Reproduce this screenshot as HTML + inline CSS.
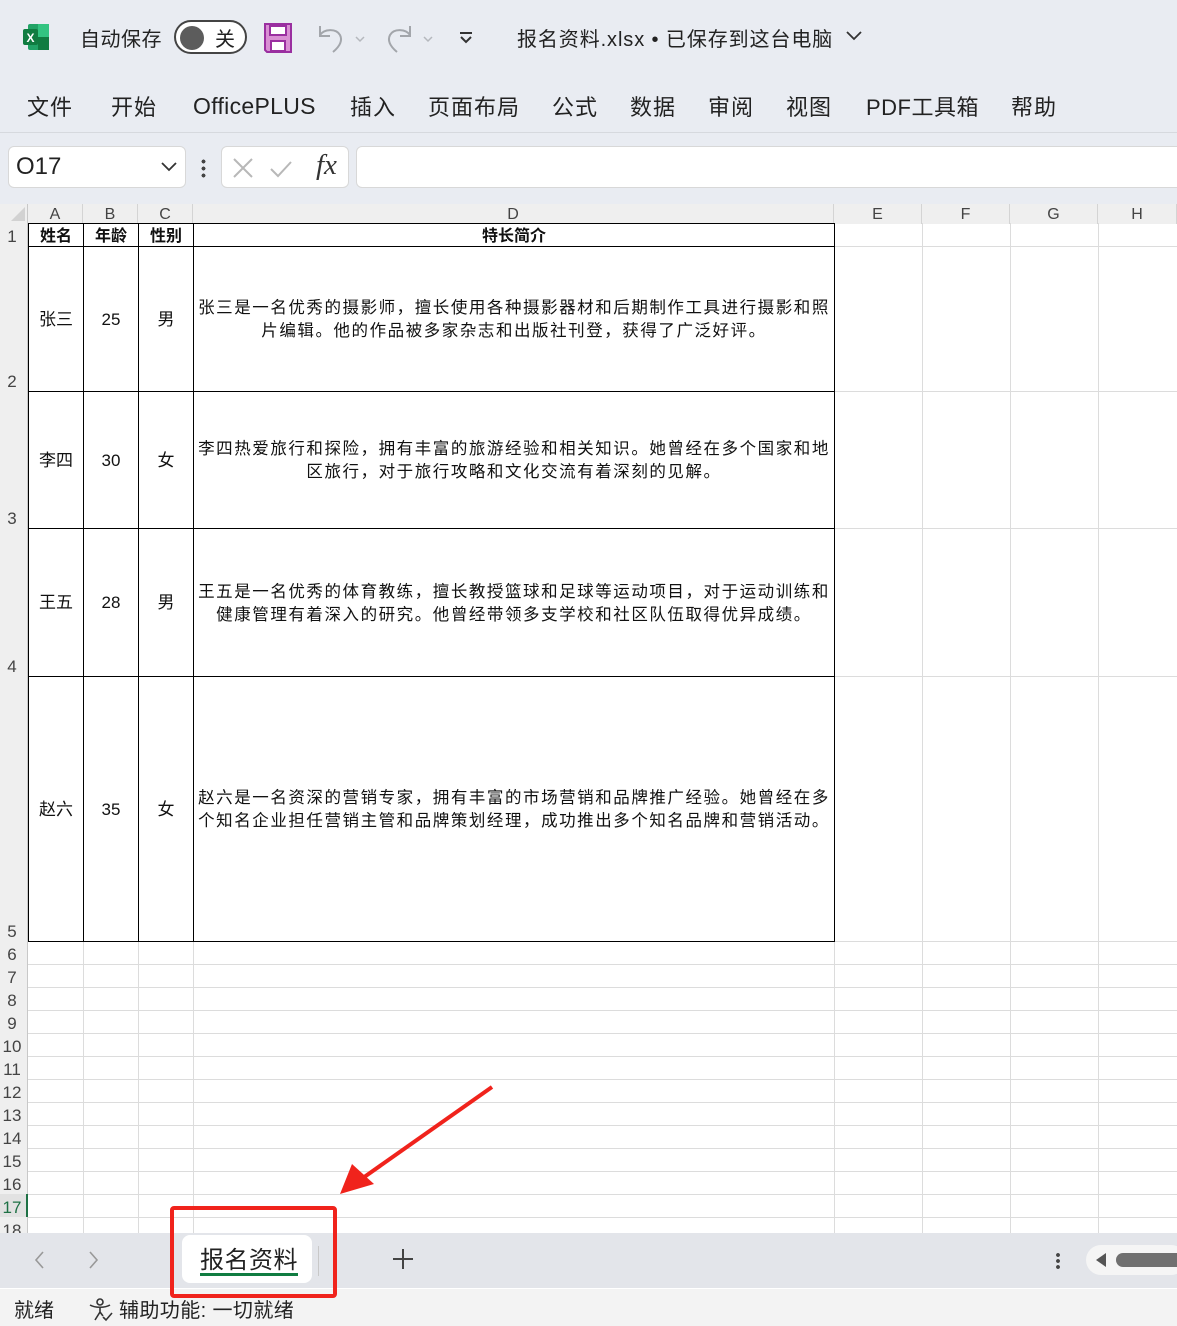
<!DOCTYPE html>
<html><head><meta charset="utf-8"><style>
*{margin:0;padding:0;box-sizing:border-box}
body{width:1177px;height:1326px;position:relative;overflow:hidden;background:#fff;font-family:"Liberation Sans","Noto Sans CJK SC",sans-serif;color:#222}
.a{position:absolute}
.top{left:0;top:0;width:1177px;height:132px;background:#e9ecf2}
.fbar{left:0;top:132px;width:1177px;height:72px;background:#e9ecf2;border-top:1px solid #d6d9de}
.t{font-size:21px;color:#222;white-space:nowrap}
.hdr{background:#efefef;color:#444;font-size:16px;text-align:center;line-height:19px}
.cell{font-size:16px;display:flex;align-items:center;justify-content:center;text-align:center;color:#111}
</style></head><body>
<div class="a top"></div>
<svg class="a" style="left:22px;top:23px" width="28" height="28" viewBox="0 0 28 28"><rect x="6" y="1" width="21" height="26" rx="2" fill="#21a366"/><rect x="16" y="1" width="11" height="13" fill="#33c481"/><rect x="16" y="14" width="11" height="13" fill="#107c41"/><rect x="1" y="6" width="15" height="16" rx="2" fill="#107c41"/><text x="8.5" y="19" font-size="12" font-weight="bold" fill="#fff" text-anchor="middle" font-family="Liberation Sans">X</text></svg>
<div class="a t" style="left:80px;top:23px;font-size:20px;letter-spacing:0.5px">自动保存</div>
<div class="a" style="left:174px;top:20px;width:73px;height:34px;border:2px solid #444;border-radius:17px;background:#fff"></div>
<div class="a" style="left:180px;top:26px;width:24px;height:24px;border-radius:50%;background:#5c5c5c"></div>
<div class="a t" style="left:215px;top:23px;font-size:20px">关</div>
<svg class="a" style="left:264px;top:23px" width="28" height="30" viewBox="0 0 28 30"><path d="M1 1H27V29H3L1 27Z" fill="#d98fd3" stroke="#9a2fa0" stroke-width="2"/><rect x="6" y="3" width="16" height="9" fill="#fff" stroke="#9a2fa0" stroke-width="2"/><rect x="7" y="18" width="14" height="10" fill="#fff" stroke="#9a2fa0" stroke-width="2"/></svg>
<svg class="a" style="left:314px;top:22px" width="60" height="32" viewBox="0 0 60 32"><path d="M6 4V14H16M6 13C10 7 22 6 26 13C29 19 25 25 19 30" fill="none" stroke="#a3a6ab" stroke-width="2"/><path d="M42 15l4 4 4-4" fill="none" stroke="#b5b8bd" stroke-width="1.5"/></svg>
<svg class="a" style="left:384px;top:22px" width="60" height="32" viewBox="0 0 60 32"><path d="M26 4V14H16M26 13C22 7 10 6 6 13C3 19 7 25 13 30" fill="none" stroke="#a3a6ab" stroke-width="2"/><path d="M40 15l4 4 4-4" fill="none" stroke="#b5b8bd" stroke-width="1.5"/></svg>
<svg class="a" style="left:458px;top:30px" width="16" height="16" viewBox="0 0 16 16"><path d="M2 3H14M3 7l5 5 5-5" fill="none" stroke="#333" stroke-width="2"/></svg>
<div class="a t" style="left:517px;top:23px;font-size:20px;letter-spacing:0.9px">报名资料.xlsx • 已保存到这台电脑</div>
<svg class="a" style="left:845px;top:30px" width="18" height="12" viewBox="0 0 18 12"><path d="M2 2l7 7 7-7" fill="none" stroke="#333" stroke-width="1.8"/></svg>
<div class="a t" style="left:27px;top:90px;font-size:22px;letter-spacing:1px">文件</div>
<div class="a t" style="left:111px;top:90px;font-size:22px;letter-spacing:1px">开始</div>
<div class="a t" style="left:193px;top:92px;font-size:23px;line-height:28px;letter-spacing:0.3px">OfficePLUS</div>
<div class="a t" style="left:350px;top:90px;font-size:22px;letter-spacing:1px">插入</div>
<div class="a t" style="left:428px;top:90px;font-size:22px;letter-spacing:1px">页面布局</div>
<div class="a t" style="left:552px;top:90px;font-size:22px;letter-spacing:1px">公式</div>
<div class="a t" style="left:630px;top:90px;font-size:22px;letter-spacing:1px">数据</div>
<div class="a t" style="left:708px;top:90px;font-size:22px;letter-spacing:1px">审阅</div>
<div class="a t" style="left:786px;top:90px;font-size:22px;letter-spacing:1px">视图</div>
<div class="a t" style="left:866px;top:90px;font-size:22px;letter-spacing:0.5px">PDF工具箱</div>
<div class="a t" style="left:1011px;top:90px;font-size:22px;letter-spacing:1px">帮助</div>
<div class="a fbar"></div>
<div class="a" style="left:8px;top:146px;width:178px;height:42px;background:#fff;border:1px solid #d8d8d8;border-radius:6px"></div>
<div class="a t" style="left:16px;top:153px;font-size:24px;color:#222">O17</div>
<svg class="a" style="left:160px;top:161px" width="18" height="12" viewBox="0 0 18 12"><path d="M2 2l7 7 7-7" fill="none" stroke="#333" stroke-width="1.8"/></svg>
<div class="a" style="left:201px;top:158px;width:5px;height:20px;background:radial-gradient(circle,#444 1.8px,transparent 2px) 0 0/5px 7px"></div>
<div class="a" style="left:221px;top:146px;width:128px;height:42px;background:#fff;border:1px solid #d8d8d8;border-radius:6px"></div>
<svg class="a" style="left:231px;top:156px" width="80" height="24" viewBox="0 0 80 24"><path d="M3 3l18 18M21 3L3 21" stroke="#b8b8b8" stroke-width="2"/><path d="M40 13l7 7 13-14" fill="none" stroke="#b8b8b8" stroke-width="2"/></svg>
<div class="a" style="left:316px;top:149px;font-family:'Liberation Serif',serif;font-style:italic;font-size:29px;color:#333">fx</div>
<div class="a" style="left:356px;top:146px;width:830px;height:42px;background:#fff;border:1px solid #d8d8d8;border-radius:6px"></div>
<div class="a" style="left:0;top:204px;width:1177px;height:19px;background:#efefef;border-bottom:1px solid #ababab"></div>
<div class="a" style="left:0;top:204px;width:28px;height:1029px;background:#efefef;border-right:1px solid #c8c8c8"></div>
<svg class="a" style="left:8px;top:206px" width="18" height="16"><path d="M17 1V15H3Z" fill="#d2d2d2"/></svg>
<div class="a" style="left:0;top:1194px;width:28px;height:23px;background:#e2e2e2;border-right:2px solid #1e7145"></div>
<div id="g"></div>
<div id="tb"></div>
<div class="a" style="left:0;top:1233px;width:1177px;height:55px;background:#e3e5ea"></div>
<svg class="a" style="left:30px;top:1249px" width="80" height="22"><path d="M13 3l-7 8 7 8M60 3l7 8-7 8" fill="none" stroke="#999" stroke-width="1.6"/></svg>
<div class="a" style="left:182px;top:1235px;width:130px;height:48px;background:#fff;border-radius:8px"></div>
<div class="a t" style="left:200px;top:1240px;font-size:24px;letter-spacing:0.5px">报名资料</div>
<div class="a" style="left:200px;top:1273px;width:98px;height:3px;background:#107c41"></div>
<div class="a" style="left:318px;top:1246px;width:1px;height:30px;background:#c8c8c8"></div>
<svg class="a" style="left:392px;top:1248px" width="22" height="22"><path d="M11 1V21M1 11H21" stroke="#444" stroke-width="2"/></svg>
<div class="a" style="left:1056px;top:1252px;width:4px;height:18px;background:radial-gradient(circle,#444 1.8px,transparent 2px) 0 0/4px 6px"></div>
<div class="a" style="left:1086px;top:1245px;width:100px;height:30px;background:#f5f5f5;border-radius:15px"></div>
<svg class="a" style="left:1094px;top:1252px" width="14" height="16"><path d="M12 1V15L2 8Z" fill="#555"/></svg>
<div class="a" style="left:1116px;top:1253px;width:70px;height:14px;background:#707070;border-radius:7px"></div>
<div class="a" style="left:0;top:1289px;width:1177px;height:37px;background:#f3f3f3"></div>
<div class="a t" style="left:14px;top:1294px;font-size:20px">就绪</div>
<svg class="a" style="left:88px;top:1297px" width="26" height="26" viewBox="0 0 26 26"><circle cx="12" cy="5" r="3" fill="none" stroke="#333" stroke-width="1.6"/><path d="M2 8c5 3 15 3 20 0M12 10v5l-5 8M12 15l3 4M15 20l3 3 6-7" fill="none" stroke="#333" stroke-width="1.6"/></svg>
<div class="a t" style="left:119px;top:1294px;font-size:20px;letter-spacing:0.4px">辅助功能: 一切就绪</div>
<div class="a" style="left:170px;top:1206px;width:167px;height:92px;border:4px solid #f0231c;border-radius:4px"></div>
<svg class="a" style="left:330px;top:1080px" width="170" height="125" viewBox="0 0 170 125"><path d="M162 7L30 100" stroke="#f0231c" stroke-width="4"/><path d="M10 114L22 84L44 104Z" fill="#f0231c"/></svg>
<script>
var cols=[28,83,138,193,834,922,1010,1098,1177],names=["A","B","C","D","E","F","G","H"];
var rows=[223,246,391,528,676,941];for(var i=0;i<12;i++)rows.push(964+23*i);
var h="";
for(var i=0;i<8;i++){h+='<div class="a hdr" style="left:'+cols[i]+'px;top:204px;width:'+(cols[i+1]-cols[i])+'px;border-right:1px solid #d4d4d4;padding-top:1px">'+names[i]+'</div>';}
for(var i=1;i<cols.length-1;i++)h+='<div class="a" style="left:'+cols[i]+'px;top:223px;width:1px;height:1010px;background:#dcdcdc"></div>';
for(var r=1;r<rows.length;r++){h+='<div class="a" style="left:28px;top:'+rows[r]+'px;width:1149px;height:1px;background:#dcdcdc"></div>';}
for(var r=0;r<rows.length;r++){var y=(r+1<rows.length?rows[r+1]:1240)-19;h+='<div class="a" style="left:0;top:'+y+'px;width:24px;font-size:17px;color:'+(r==16?'#1e7145':'#444')+';text-align:center">'+(r+1)+'</div>';}
document.getElementById("g").innerHTML=h;
var d=[["姓名","年龄","性别","特长简介"],["张三","25","男","张三是一名优秀的摄影师，擅长使用各种摄影器材和后期制作工具进行摄影和照<br>片编辑。他的作品被多家杂志和出版社刊登，获得了广泛好评。"],["李四","30","女","李四热爱旅行和探险，拥有丰富的旅游经验和相关知识。她曾经在多个国家和地<br>区旅行，对于旅行攻略和文化交流有着深刻的见解。"],["王五","28","男","王五是一名优秀的体育教练，擅长教授篮球和足球等运动项目，对于运动训练和<br>健康管理有着深入的研究。他曾经带领多支学校和社区队伍取得优异成绩。"],["赵六","35","女","赵六是一名资深的营销专家，拥有丰富的市场营销和品牌推广经验。她曾经在多<br>个知名企业担任营销主管和品牌策划经理，成功推出多个知名品牌和营销活动。"]];
var t="";
for(var r=0;r<5;r++){for(var c=0;c<4;c++){var st=r==0?"font-weight:bold;padding-top:3px;":"";if(c<3&&r>0)st+="font-size:17px;";if(c==3&&r>0)st+="letter-spacing:1.55px;font-size:16.5px;padding-top:2px;";t+='<div class="a cell" style="'+st+'left:'+cols[c]+'px;top:'+rows[r]+'px;width:'+(cols[c+1]-cols[c]+1)+'px;height:'+(rows[r+1]-rows[r]+1)+'px;border:1px solid #000;line-height:23px">'+d[r][c]+'</div>';}}
document.getElementById("tb").innerHTML=t;
</script>
</body></html>
